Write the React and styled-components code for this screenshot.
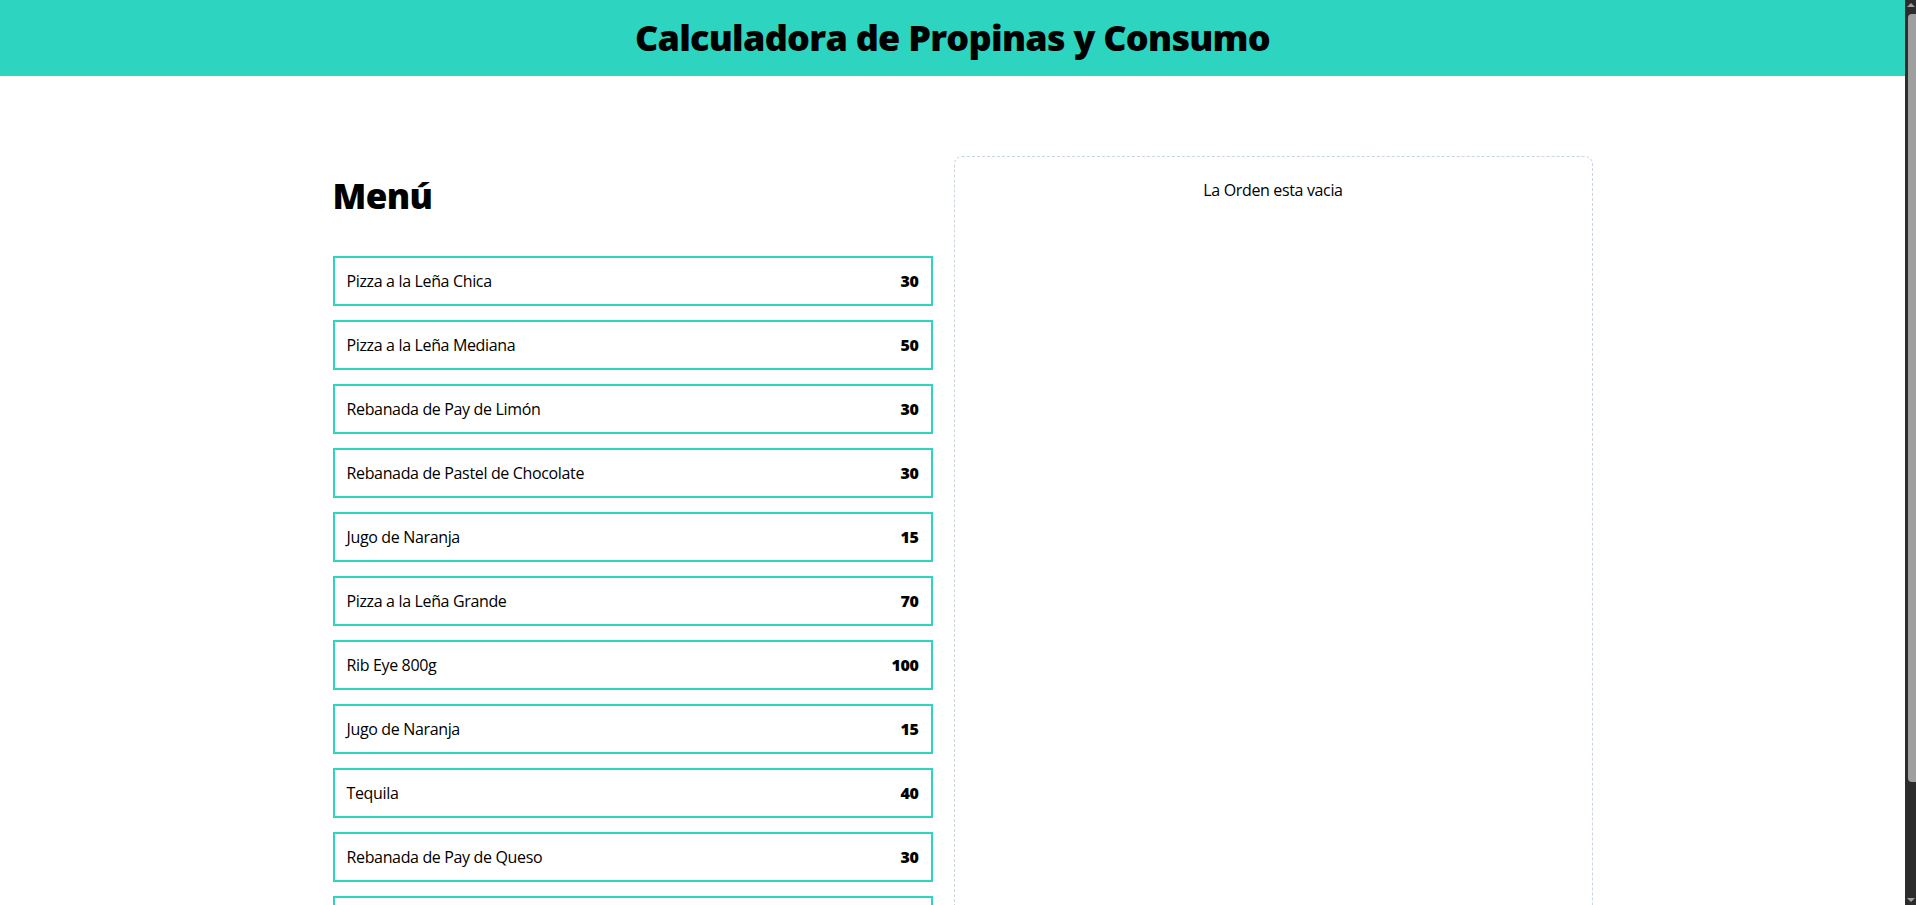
import React from "react";
import styled, { createGlobalStyle } from "styled-components";

const menuItems = [
  { id: 1, name: "Pizza a la Leña Chica", price: 30 },
  { id: 2, name: "Pizza a la Leña Mediana", price: 50 },
  { id: 3, name: "Rebanada de Pay de Limón", price: 30 },
  { id: 4, name: "Rebanada de Pastel de Chocolate", price: 30 },
  { id: 5, name: "Jugo de Naranja", price: 15 },
  { id: 6, name: "Pizza a la Leña Grande", price: 70 },
  { id: 7, name: "Rib Eye 800g", price: 100 },
  { id: 8, name: "Jugo de Naranja", price: 15 },
  { id: 9, name: "Tequila", price: 40 },
  { id: 10, name: "Rebanada de Pay de Queso", price: 30 },
  { id: 11, name: "Café Americano", price: 20 },
];

const GlobalStyle = createGlobalStyle`
  * { box-sizing: border-box; }
  body {
    margin: 0;
    font-family: "Open Sans", "Noto Sans", sans-serif;
    color: #000;
    background: #fff;
    line-height: 1.5;
  }
`;

/* the page is drawn beside a dark 11px scrollbar, as in the capture */
const Page = styled.div`
  margin-right: 11px;
`;

const ScrollTrack = styled.div`
  position: fixed;
  top: 0;
  right: 0;
  width: 11px;
  height: 100vh;
  background: #2c2c2c;
  z-index: 10;
`;

const ScrollThumb = styled.div`
  position: absolute;
  top: 14px;
  right: 0;
  width: 8px;
  height: 768px;
  background: #9f9f9f;
  border-radius: 4px 0 0 4px;
`;

const ScrollArrow = styled.div`
  position: absolute;
  right: 1px;
  width: 0;
  height: 0;
  border-left: 4px solid transparent;
  border-right: 4px solid transparent;
  ${({ $down }) =>
    $down
      ? "bottom: 3px; border-top: 4px solid #9f9f9f;"
      : "top: 3px; border-bottom: 4px solid #9f9f9f;"}
`;

const Header = styled.header`
  background: #2dd4bf;
  height: 76px;
  display: flex;
  align-items: center;
  justify-content: center;
`;

const Title = styled.h1`
  margin: 0;
  font-size: 36px;
  font-weight: 800;
  letter-spacing: -0.75px;
  line-height: 40px;
`;

const Main = styled.main`
  max-width: 1280px;
  margin: 0 auto;
  padding: 80px 0;
  display: grid;
  grid-template-columns: 640px 639px;
  column-gap: 1px;
`;

const MenuColumn = styled.section`
  padding: 20px;
`;

const Heading = styled.h2`
  margin: 0;
  font-size: 35px;
  font-weight: 800;
  letter-spacing: -0.6px;
  line-height: 40px;
`;

const List = styled.div`
  margin-top: 40px;
  display: flex;
  flex-direction: column;
  gap: 14px;
`;

const ItemButton = styled.button`
  height: 50px;
  width: 100%;
  border: 2px solid #2dd4bf;
  background: #fff;
  padding: 0 12px;
  display: flex;
  align-items: center;
  justify-content: space-between;
  font-family: inherit;
  font-size: 16px;
  color: #000;
  cursor: pointer;
  letter-spacing: -0.35px;
  &:hover { background: #99f6e4; }
`;

const Price = styled.span`
  font-weight: 800;
`;

const OrderPanel = styled.section`
  border: 1px dashed #cbd5e1;
  border-radius: 8px;
  padding: 21px 40px;
`;

const Empty = styled.p`
  margin: 0;
  text-align: center;
  font-size: 16px;
  letter-spacing: -0.35px;
`;

export default function App() {
  return (
    <>
      <GlobalStyle />
      <ScrollTrack>
        <ScrollArrow />
        <ScrollThumb />
        <ScrollArrow $down />
      </ScrollTrack>
      <Page>
        <Header>
          <Title>Calculadora de Propinas y Consumo</Title>
        </Header>
        <Main>
          <MenuColumn>
            <Heading>Menú</Heading>
            <List>
              {menuItems.map((item) => (
                <ItemButton key={item.id}>
                  <span>{item.name}</span>
                  <Price>{item.price}</Price>
                </ItemButton>
              ))}
            </List>
          </MenuColumn>
          <OrderPanel>
            <Empty>La Orden esta vacia</Empty>
          </OrderPanel>
        </Main>
      </Page>
    </>
  );
}
